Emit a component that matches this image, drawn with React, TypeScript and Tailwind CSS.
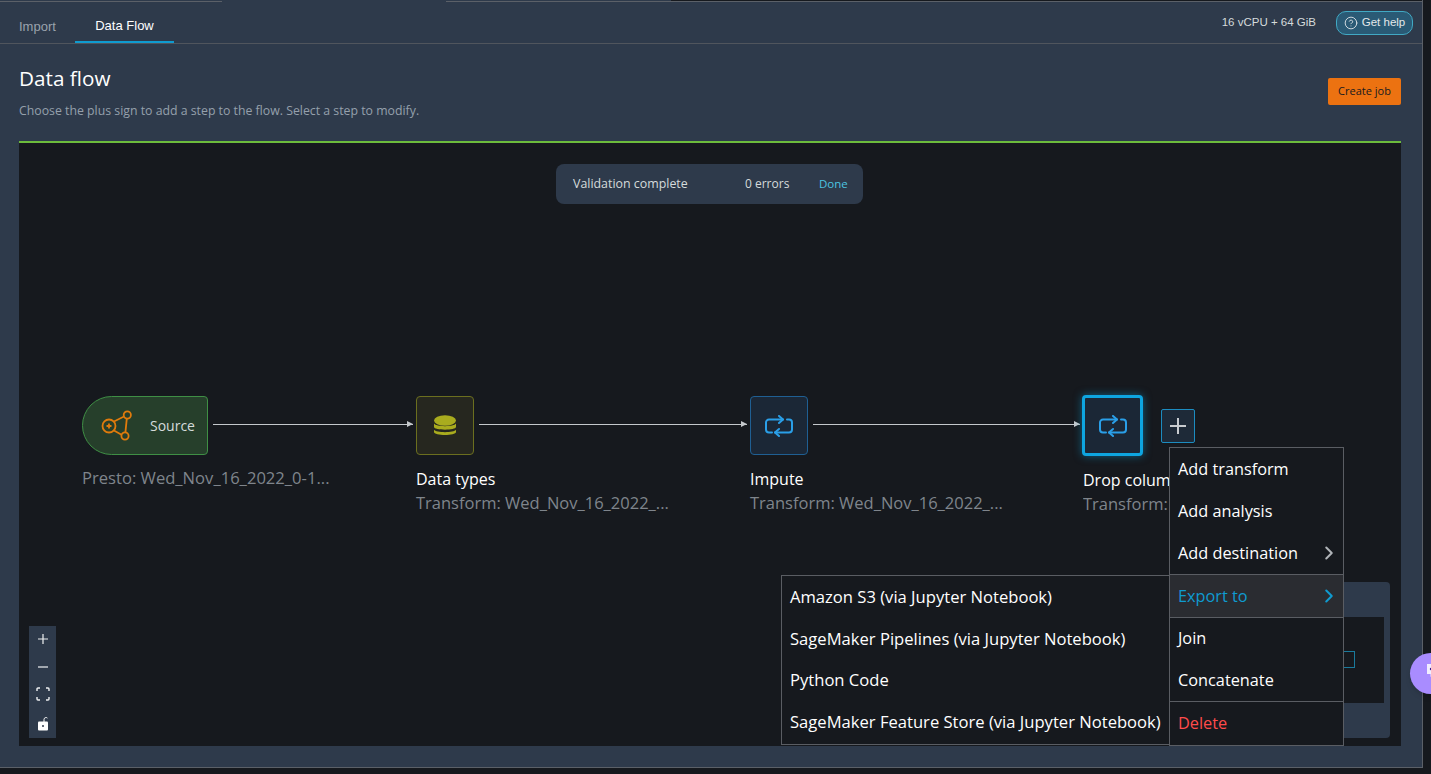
import { ChevronRight, CircleHelp } from "lucide-react";

const ember = "font-['Open_Sans',sans-serif]";

function RepeatIcon({ className }: { className?: string }) {
  return (
    <svg viewBox="0 0 28 22" fill="none" stroke="currentColor" strokeWidth="2" strokeLinecap="round" strokeLinejoin="round" className={className}>
      <path d="M7 17.5H4a3 3 0 0 1-3-3V7.5a3 3 0 0 1 3-3H18" />
      <path d="M14 1l4 3.5L14 8" />
      <path d="M22 4.5h2a3 3 0 0 1 3 3v7a3 3 0 0 1-3 3H10" />
      <path d="M14 14l-4 3.5L14 21" />
    </svg>
  );
}

function SourceIcon() {
  return (
    <svg viewBox="0 0 32 32" fill="none" stroke="#e07b0c" strokeWidth="1.8" className="w-8 h-8">
      <circle cx="8" cy="16" r="6.5" />
      <circle cx="26.3" cy="5" r="3.6" />
      <circle cx="24" cy="26" r="3.6" />
      <path d="M13 11.5l10-5M13 20.5l7.5 4.2M25.8 8.6l-1.4 13.8" />
      <path d="M5.5 16h5M8 13.5v5" />
    </svg>
  );
}

function DatabaseIcon() {
  return (
    <svg viewBox="0 0 22 22" fill="#a9ac1e" className="w-[22px] h-[22px]">
      <ellipse cx="11" cy="5.5" rx="11" ry="5.2" />
      <path d="M0 8.5C2 12 20 12 22 8.5V12C22 15.5 0 15.5 0 12Z" />
      <path d="M0 14.8C2 18 20 18 22 14.8V17C22 21 0 21 0 17Z" />
    </svg>
  );
}

function Connector({ className }: { className: string }) {
  return (
    <div className={`absolute top-[281px] h-px bg-[#c4c8cc] ${className}`}>
      <div className="absolute right-0 -top-[3px] w-0 h-0 border-y-[3.5px] border-y-transparent border-l-[6px] border-l-[#c4c8cc]" />
    </div>
  );
}

function MenuItem({
  label,
  chevron,
  className = "text-white",
  height = "h-[42px]",
}: {
  label: string;
  chevron?: boolean;
  className?: string;
  height?: string;
}) {
  return (
    <div className={`flex items-center justify-between pl-2 pr-[3px] text-[16.3px] font-medium ${height} ${className}`}>
      <span>{label}</span>
      {chevron && <ChevronRight size={22} strokeWidth={2.2} />}
    </div>
  );
}

export default function App() {
  return (
    <div className={`relative w-[1431px] h-[774px] overflow-hidden bg-[#16191e] ${ember}`}>
      <div className="w-[1423px] h-[768px] flex flex-col bg-[#2e3a4b] border-r border-b border-[#5b6068]">
        {/* top strip */}
        <div className="flex h-0.5 shrink-0 bg-[#2e3a4b]">
          <div className="w-[222px] border-b border-[#5b6068]" />
          <div className="w-[224px]" />
          <div className="w-[225px] border-b border-[#5b6068]" />
          <div className="flex-1 bg-[#16191e] border-b border-[#5b6068]" />
        </div>

        {/* tabs */}
        <div className="flex h-[42px] shrink-0 items-center justify-between border-b border-[#50555d] pr-[9px] font-['Liberation_Sans',sans-serif]">
          <div className="flex h-full items-stretch text-[13px]">
            <div className="flex w-[75px] items-center pl-[19px] pt-2 text-[#9aa3ad]">Import</div>
            <div className="flex w-[99px] items-center justify-center pt-2 text-white border-b-2 border-[#0f9bd0]">Data Flow</div>
          </div>
          <div className="flex items-center gap-5">
            <span className="text-[11.5px] text-[#d5dbdb]">16 vCPU + 64 GiB</span>
            <div className="flex h-6 w-[77px] items-center justify-center gap-1 rounded-[10px] border border-[#41a9c4] bg-[#2a5a75] text-[11.5px] text-[#e4e8ea]">
              <CircleHelp size={14} strokeWidth={1.5} />
              <span className="pt-px">Get help</span>
            </div>
          </div>
        </div>

        {/* page header */}
        <div className="flex h-[97px] shrink-0 items-start justify-between pl-[19px] pr-[21px]">
          <div>
            <h1 className="mt-5 text-[20.7px] leading-7 font-medium text-white">Data flow</h1>
            <p className="mt-[11px] text-[12.3px] leading-4 text-[#95a0ab]">Choose the plus sign to add a step to the flow. Select a step to modify.</p>
          </div>
          <button className="mt-[34px] h-[27px] w-[73px] rounded-[2px] bg-[#ec7211] text-[11px] font-medium text-[#16191f]">Create job</button>
        </div>

        {/* canvas */}
        <div className="relative ml-[19px] w-[1382px] h-[605px] shrink-0 bg-[#16191e] border-t-2 border-[#6cbb3c]">
          <div className="absolute left-[537px] top-[21px] flex h-10 w-[307px] items-center rounded-lg bg-[#2e3a4b] pl-[17px] font-medium">
            <span className="w-[172px] text-[12.4px] text-[#d5dbdb]">Validation complete</span>
            <span className="w-[74px] text-[12px] text-[#d5dbdb]">0 errors</span>
            <span className="text-[11.5px] text-[#4cc4e0]">Done</span>
          </div>

          {/* source */}
          <div className="absolute left-[63px] top-[253px] flex h-[59px] w-[126px] items-center rounded-l-[30px] rounded-r border border-[#3f8f45] bg-[#263f2b]">
            <div className="ml-[18px]"><SourceIcon /></div>
            <span className="ml-[17px] text-[14px] font-medium text-[#d5dbdb]">Source</span>
          </div>
          <div className="absolute left-[63px] top-[323px] text-[16.6px] text-[#7f858c]">Presto: Wed_Nov_16_2022_0-1...</div>
          <Connector className="left-[194px] w-[200px]" />

          {/* data types */}
          <div className="absolute left-[397px] top-[253px] flex h-[59px] w-[58px] items-center justify-center rounded border border-[#6b6f1f] bg-[#26271f]">
            <DatabaseIcon />
          </div>
          <div className="absolute left-[397px] top-[324px] text-[16px] font-medium text-white">Data types</div>
          <div className="absolute left-[397px] top-[348px] text-[16.5px] text-[#7f858c]">Transform: Wed_Nov_16_2022_...</div>
          <Connector className="left-[460px] w-[268px]" />

          {/* impute */}
          <div className="absolute left-[731px] top-[253px] flex h-[59px] w-[58px] items-center justify-center rounded border border-[#1f5f93] bg-[#1b2736] text-[#2a9fe8]">
            <RepeatIcon className="w-7 h-[22px]" />
          </div>
          <div className="absolute left-[731px] top-[324px] text-[16px] font-medium text-white">Impute</div>
          <div className="absolute left-[731px] top-[348px] text-[16.5px] text-[#7f858c]">Transform: Wed_Nov_16_2022_...</div>
          <Connector className="left-[794px] w-[267px]" />

          {/* drop column */}
          <div className="absolute left-[1063px] top-[252px] flex h-[61px] w-[61px] items-center justify-center rounded border-[3px] border-[#0ea5e0] bg-[#1b2736] text-[#2a9fe8] shadow-[0_0_8px_rgba(14,165,224,0.5)]">
            <RepeatIcon className="w-7 h-[22px]" />
          </div>
          <div className="absolute left-[1064px] top-[325px] w-[86px] overflow-hidden whitespace-nowrap text-[16px] font-medium text-white">Drop column</div>
          <div className="absolute left-[1064px] top-[349px] w-[86px] overflow-hidden whitespace-nowrap text-[16.5px] text-[#7f858c]">Transform: Wed_Nov_16_2022_...</div>
          <div className="absolute left-[1142px] top-[266px] flex h-[34px] w-[34px] items-center justify-center rounded-[2px] border border-[#1c8cc0] bg-[#1e2a38]">
            <svg viewBox="0 0 18 18" className="w-[18px] h-[18px]" stroke="#c8ccd0" strokeWidth="2"><path d="M9 1v16M1 9h16" /></svg>
          </div>

          {/* panel behind the menus */}
          <div className="absolute left-[1100px] top-[439px] h-[156px] w-[271px] rounded bg-[#2e3a4b]">
            <div className="absolute left-0 top-[35px] h-[86px] w-[265px] bg-[#16191e]">
              <div className="absolute right-[29px] top-[34px] h-[17px] w-[60px] border border-[#1a7a9c]" />
            </div>
          </div>

          {/* zoom controls */}
          <div className="absolute left-[10px] top-[483px] flex h-[112px] w-[27px] flex-col items-center bg-[#2e3a4b]">
            <div className="flex h-7 -mt-px items-center">
              <svg viewBox="0 0 12 12" className="w-3 h-3" stroke="#eef0f2" strokeWidth="1.2"><path d="M6 1v10M1 6h10" /></svg>
            </div>
            <div className="flex h-7 items-center">
              <svg viewBox="0 0 12 12" className="w-3 h-3" stroke="#eef0f2" strokeWidth="1.2"><path d="M1 6h10" /></svg>
            </div>
            <div className="flex h-7 items-center">
              <svg viewBox="0 0 14 14" className="w-[14px] h-[14px]" fill="none" stroke="#eef0f2" strokeWidth="1.4"><path d="M1 4V2a1 1 0 0 1 1-1h2M10 1h2a1 1 0 0 1 1 1v2M13 10v2a1 1 0 0 1-1 1h-2M4 13H2a1 1 0 0 1-1-1v-2" /></svg>
            </div>
            <div className="flex h-[30px] items-center">
              <svg viewBox="0 0 12 15" className="w-3 h-[15px]">
                <path d="M7 6V3.5a2 2 0 0 1 3.4-1.4" fill="none" stroke="#ffffff" strokeWidth="1" />
                <rect x="1" y="5.5" width="10" height="9" rx="1" fill="#ffffff" />
                <circle cx="6" cy="10" r="1" fill="#2e3a4b" />
              </svg>
            </div>
          </div>

          {/* export submenu */}
          <div className="absolute left-[762px] top-[432px] h-[170px] w-[389px] border border-[#5a5d63] bg-[#16191e] pl-2 text-[16.6px] font-medium text-white">
            <div className="flex h-[42px] items-center">Amazon S3 (via Jupyter Notebook)</div>
            <div className="flex h-[42px] items-center">SageMaker Pipelines (via Jupyter Notebook)</div>
            <div className="flex h-[41px] items-center">Python Code</div>
            <div className="flex h-[42px] items-center">SageMaker Feature Store (via Jupyter Notebook)</div>
          </div>

          {/* context menu */}
          <div className="absolute left-[1150px] top-[304px] w-[175px] border border-[#5a5d63] bg-[#16191e]">
            <MenuItem label="Add transform" />
            <MenuItem label="Add analysis" />
            <MenuItem label="Add destination" chevron className="text-white [&>svg]:text-[#b0b4b8]" />
            <div className="-mb-px border-y border-[#5a5d63] bg-[#2a2c31]">
              <MenuItem label="Export to" chevron className="text-[#0f9bd0]" />
            </div>
            <MenuItem label="Join" />
            <MenuItem label="Concatenate" />
            <div className="border-t border-[#5a5d63]">
              <MenuItem label="Delete" height="h-[43px]" className="text-[#ff4b4b]" />
            </div>
          </div>
        </div>
      </div>

      {/* chat bubble, cut off by the window */}
      <div className="absolute left-[1410px] top-[653px] h-[41px] w-[41px] rounded-full bg-[#a98cff] shadow-md">
        <svg viewBox="0 0 16 16" className="absolute left-[16px] top-[10px] w-4 h-4">
          <path d="M1 1h14v10H7l-2.5 3V11H1Z" fill="#f2eeff" />
          <circle cx="5" cy="6" r="1.2" fill="#3b1f8f" />
        </svg>
      </div>
    </div>
  );
}
